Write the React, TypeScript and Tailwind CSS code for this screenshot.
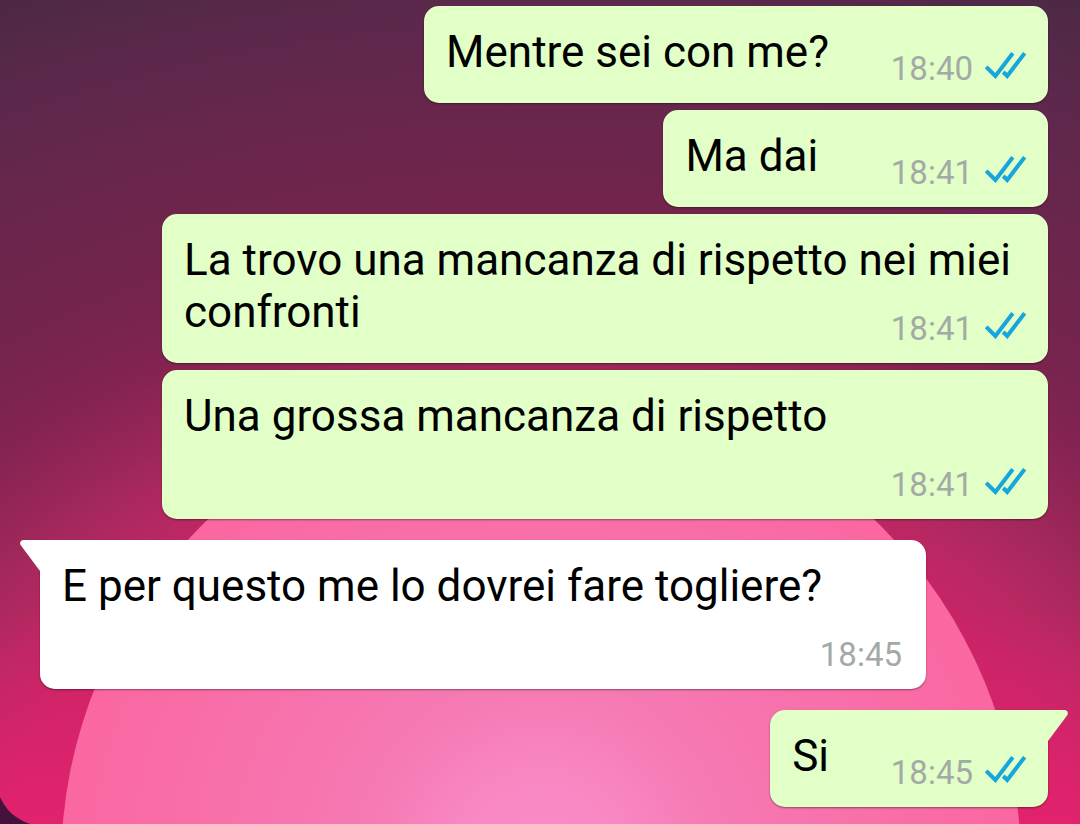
import React from 'react';
import clsx from 'clsx';

interface Message {
  id: number;
  text: string;
  time: string;
  outgoing: boolean;
  firstOfGroup?: boolean;
}

const messages: Message[] = [
  { id: 1, text: 'Mentre sei con me?', time: '18:40', outgoing: true },
  { id: 2, text: 'Ma dai\u00a0', time: '18:41', outgoing: true },
  { id: 3, text: 'La trovo una mancanza di rispetto nei miei confronti', time: '18:41', outgoing: true },
  { id: 4, text: 'Una grossa mancanza di rispetto\u00a0', time: '18:41', outgoing: true },
  { id: 5, text: 'E per questo me lo dovrei fare togliere?', time: '18:45', outgoing: false, firstOfGroup: true },
  { id: 6, text: 'Si', time: '18:45', outgoing: true, firstOfGroup: true },
];

function Wallpaper() {
  return (
    <svg
      className="absolute inset-0 h-full w-full"
      viewBox="0 0 1080 824"
      preserveAspectRatio="xMidYMid slice"
      aria-hidden="true"
    >
      <defs>
        <radialGradient
          id="sky"
          gradientUnits="userSpaceOnUse"
          cx="0"
          cy="0"
          r="950"
          gradientTransform="translate(541 865) scale(1.4 1)"
        >
          <stop offset="0.4" stopColor="#c82466" />
          <stop offset="0.45" stopColor="#b92862" />
          <stop offset="0.5" stopColor="#a6285c" />
          <stop offset="0.54" stopColor="#962657" />
          <stop offset="0.6" stopColor="#832352" />
          <stop offset="0.66" stopColor="#76244e" />
          <stop offset="0.72" stopColor="#70254c" />
          <stop offset="0.8" stopColor="#68264d" />
          <stop offset="0.9" stopColor="#5c284b" />
          <stop offset="1" stopColor="#4b2945" />
        </radialGradient>
        <linearGradient id="glow" x1="0" y1="0" x2="0" y2="1">
          <stop offset="0.74" stopColor="#e6226f" stopOpacity="0" />
          <stop offset="1" stopColor="#ea226f" stopOpacity="0.75" />
        </linearGradient>
        <radialGradient id="sun" gradientUnits="userSpaceOnUse" cx="541" cy="865" r="480">
          <stop offset="0" stopColor="#f98dc9" />
          <stop offset="0.2" stopColor="#f886c1" />
          <stop offset="0.36" stopColor="#f67ab4" />
          <stop offset="0.6" stopColor="#f772ac" />
          <stop offset="1" stopColor="#fb67a1" />
        </radialGradient>
      </defs>
      <rect width="1080" height="824" fill="url(#sky)" />
      <rect width="1080" height="824" fill="url(#glow)" />
      <circle cx="541" cy="865" r="480" fill="url(#sun)" />
      <path d="M0 797C6 810 14 818 30 824H0Z" fill="#43133c" />
    </svg>
  );
}

function ReadTicks() {
  return (
    <svg
      className="mb-2 h-[27px] w-[41px]"
      viewBox="0 0 41 27"
      fill="none"
      stroke="#16a5dd"
      strokeWidth="4"
      role="img"
      aria-label="Letto"
    >
      <path d="M1.2 14.8L10.4 24L27.8 1.2" />
      <path d="M18.2 20L22.2 24L39.6 1.2" />
    </svg>
  );
}

function Tail({ outgoing }: { outgoing: boolean }) {
  return (
    <svg
      className={clsx(
        'absolute top-0 h-[32px] w-[28px]',
        outgoing ? '-right-[20px] fill-[#e1ffc7]' : '-left-[20px] -scale-x-100 fill-white',
      )}
      viewBox="0 0 28 32"
      aria-hidden="true"
    >
      <path d="M0 0H25Q29 1 27.4 5L8 31H0Z" />
    </svg>
  );
}

function Bubble({ message }: { message: Message }) {
  const { text, time, outgoing, firstOfGroup } = message;

  return (
    <li
      className={clsx(
        'relative flow-root max-w-[886px] rounded-[15px] pt-5 pb-[14px] pl-[22px] shadow-[0_1px_2px_rgba(0,0,0,0.4)]',
        outgoing ? 'self-end bg-[#e1ffc7] pr-[22px]' : 'self-start bg-white pr-6',
        firstOfGroup && 'mt-[14px]',
        firstOfGroup && (outgoing ? 'rounded-tr-none' : 'rounded-tl-none'),
      )}
    >
      {firstOfGroup && <Tail outgoing={outgoing} />}
      <span className="text-[44px] leading-[52px] text-black">{text}</span>
      {/* floats beside the last line when it fits, drops below when it doesn't */}
      <div className="float-right mt-[23px] flex h-10 w-[197px] items-center justify-end gap-3">
        <time className="text-[33px] leading-10 text-[#a3aaa6]">{time}</time>
        {outgoing && <ReadTicks />}
      </div>
    </li>
  );
}

export default function App() {
  return (
    <main className="relative min-h-screen overflow-hidden bg-[#66254d] font-['Roboto',sans-serif]">
      <Wallpaper />
      <ul className="relative flex flex-col gap-[7px] pt-[6px] pr-8 pb-[17px] pl-10">
        {messages.map((message) => (
          <Bubble key={message.id} message={message} />
        ))}
      </ul>
    </main>
  );
}
